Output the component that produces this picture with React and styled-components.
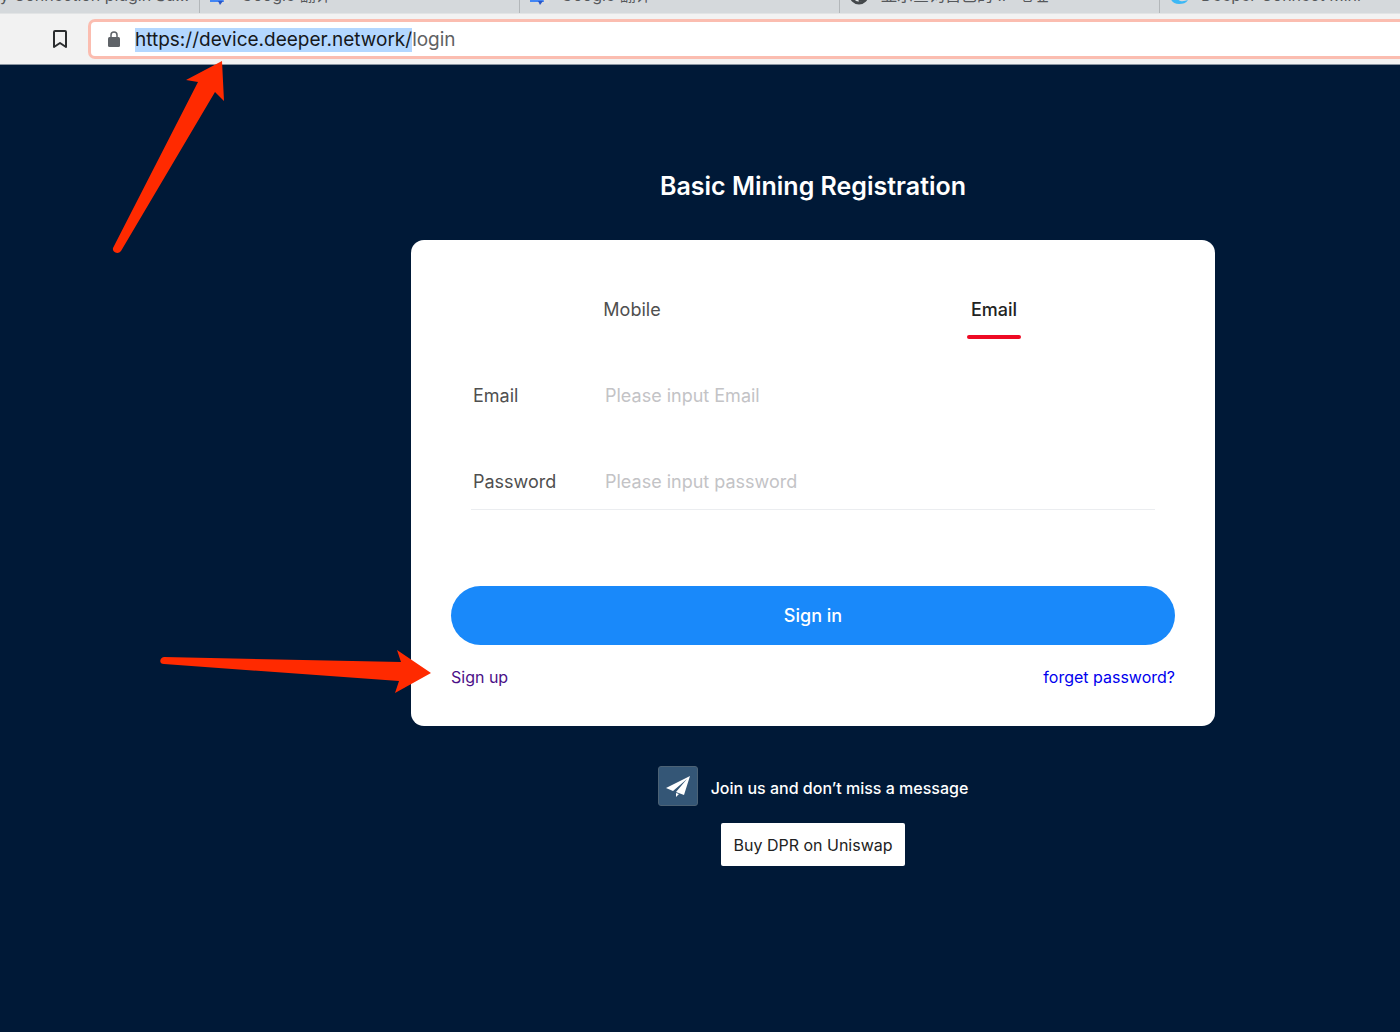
import React, { useState } from 'react';
import styled, { createGlobalStyle } from 'styled-components';

const colors = {
  navy: '#001937',
  white: '#ffffff',
  blue: '#1989fa',
  red: '#ee0a24',
  marker: '#ff2a00',
  text: '#4f4f4f',
  dark: '#222222',
  placeholder: '#c3c3c6',
};

const GlobalStyle = createGlobalStyle`
  * {
    box-sizing: border-box;
  }
  body {
    margin: 0;
    background: ${colors.navy};
    font-family: Inter, 'Noto Sans CJK SC', sans-serif;
  }
  button,
  input {
    font: inherit;
  }
`;

const Window = styled.div`
  position: relative;
  min-height: 100vh;
  overflow: hidden;
`;
const TabStrip = styled.div`
  display: flex;
  height: 14px;
  overflow: hidden;
  background: #d5d9dc;
  border-bottom: 1px solid #e2e4e5;
`;
const BrowserTab = styled.div`
  display: flex;
  flex: 0 0 ${props => (props.$first ? '199px' : '320px')};
  align-items: flex-end;
  height: 14px;
  gap: 12px;
  padding-left: ${props => (props.$first ? '0' : '10px')};
  box-shadow: 1px 0 0 #b3b7ba;
  font-size: 16px;
  line-height: 20px;
  color: #55585b;
  white-space: nowrap;
  svg {
    flex: none;
    margin-bottom: 9px;
  }
  span {
    margin-bottom: 9px;
  }
`;
const Toolbar = styled.div`
  display: flex;
  align-items: center;
  height: 51px;
  padding-left: 50px;
  background: #f2f2f2;
  border-bottom: 1px solid #8a94a0;
`;
const BookmarkButton = styled.button`
  display: flex;
  margin-right: 18px;
  padding: 0;
  border: 0;
  background: transparent;
`;
const AddressBar = styled.div`
  display: flex;
  flex: 1;
  align-items: center;
  height: 40px;
  padding-left: 15px;
  background: ${colors.white};
  border: 3px solid #fbbdb0;
  border-right: 0;
  border-radius: 7px 0 0 7px;
`;
const Url = styled.div`
  margin-left: 13px;
  padding-top: 1px;
  font-size: 19px;
  line-height: 24px;
  color: #5f6163;
  mark {
    display: inline-block;
    background: #b3d7ff;
    color: #16181a;
  }
`;

const Page = styled.main`
  display: flex;
  flex-direction: column;
  align-items: center;
  padding: 105px 0 40px 226px;
`;
const Title = styled.h1`
  margin: 0 0 38px;
  font-size: 25px;
  font-weight: 600;
  line-height: 32px;
  color: ${colors.white};
`;
const Card = styled.form`
  width: 100%;
  max-width: 804px;
  padding: 40px 40px 37px;
  background: ${colors.white};
  border-radius: 13px;
`;
const Tabs = styled.div`
  display: flex;
`;
const Tab = styled.button`
  display: flex;
  flex: 1;
  flex-direction: column;
  align-items: center;
  height: 60px;
  padding: 0;
  border: 0;
  background: transparent;
  font-size: 18px;
  font-weight: ${props => (props.$active ? 500 : 400)};
  line-height: 60px;
  color: ${props => (props.$active ? colors.dark : colors.text)};
  &:after {
    content: '';
    width: 54px;
    height: 4px;
    margin-top: -5px;
    border-radius: 2px;
    background: ${props => (props.$active ? colors.red : 'transparent')};
  }
`;
const Fields = styled.div`
  display: flex;
  flex-direction: column;
  gap: 30px;
  margin: 0 20px;
  padding-top: 27px;
  border-bottom: 1px solid #ebedf0;
`;
const Field = styled.div`
  display: flex;
  align-items: center;
  height: 56px;
  padding-left: 2px;
  font-size: 18px;
  label {
    width: 132px;
    color: ${colors.text};
  }
  input {
    flex: 1;
    min-width: 0;
    padding: 0;
    border: 0;
    outline: none;
    color: ${colors.dark};
  }
  input::placeholder {
    color: ${colors.placeholder};
  }
`;
const SubmitButton = styled.button`
  width: 100%;
  height: 59px;
  margin-top: 76px;
  border: 0;
  border-radius: 30px;
  background: ${colors.blue};
  font-size: 18px;
  font-weight: 500;
  color: ${colors.white};
`;
const CardLinks = styled.div`
  display: flex;
  justify-content: space-between;
  margin-top: 20px;
`;
const CardLink = styled.a`
  font-size: 16px;
  line-height: 24px;
  color: ${props => (props.$visited ? '#4b0f87' : '#0000ee')};
  text-decoration: none;
`;
const JoinLink = styled.a`
  display: flex;
  align-items: center;
  gap: 13px;
  margin-top: 40px;
  font-size: 16px;
  font-weight: 500;
  color: ${colors.white};
  text-decoration: none;
  span {
    padding-top: 4px;
  }
`;
const TelegramBadge = styled.div`
  display: flex;
  align-items: center;
  justify-content: center;
  width: 40px;
  height: 40px;
  border: 1px solid #4c6275;
  border-radius: 3px;
  background: #345676;
`;
const BuyButton = styled.button`
  height: 43px;
  margin-top: 17px;
  padding: 0 12px;
  border: 0;
  border-radius: 2px;
  background: ${colors.white};
  font-size: 16px;
  color: ${colors.dark};
`;
// pointers drawn over the page
const Arrow = styled.svg`
  position: absolute;
  left: ${props => props.$left}px;
  top: ${props => props.$top}px;
  pointer-events: none;
`;

const TranslateIcon = () => (
  <svg width="20" height="20" viewBox="0 0 20 20">
    <rect x="6" y="3" width="14" height="15" rx="1" fill="#dcdcdc" />
    <path d="M1 0h11l3 17H1z" fill="#4285f4" />
    <path d="M9 16h5l-3 4z" fill="#2a56c6" />
  </svg>
);
const GlobeIcon = () => (
  <svg width="20" height="20" viewBox="0 0 20 20">
    <circle cx="10" cy="10" r="8" fill="#e4e7e9" stroke="#44484b" strokeWidth="3" />
    <path d="M10 3c5 2 5 6 1 8s-1 4-1 6c9 0 10-12 0-14z" fill="#44484b" />
  </svg>
);
const SwirlIcon = () => (
  <svg width="20" height="20" viewBox="0 0 20 20">
    <path d="M2 5c-3 8 1 14 8 14 4 0 7-1 9-4-5 2-11 2-11-4z" fill="#3db8f5" />
  </svg>
);

const browserTabs = [
  { title: 'y Connection plugin Su…' },
  { title: 'Google 翻译', icon: TranslateIcon },
  { title: 'Google 翻译', icon: TranslateIcon },
  { title: '显示查询自己的 IP 地址', icon: GlobeIcon },
  { title: 'Deeper Connect Mini', icon: SwirlIcon },
];

const App = () => {
  const [activeTab, setActiveTab] = useState('Email');

  return (
    <Window>
      <GlobalStyle />
      <TabStrip>
        {browserTabs.map(({ title, icon: Icon }, i) => (
          <BrowserTab key={i} $first={i === 0}>
            {Icon && <Icon />}
            <span>{title}</span>
          </BrowserTab>
        ))}
      </TabStrip>
      <Toolbar>
        <BookmarkButton type="button" aria-label="Bookmark">
          <svg width="20" height="22" viewBox="0 0 20 22" fill="none" stroke="#2b2d2f" strokeWidth="2">
            <path d="M4 4q0-1 1-1h10q1 0 1 1v15l-6-4-6 4z" strokeLinejoin="round" />
          </svg>
        </BookmarkButton>
        <AddressBar>
          <svg width="16" height="18" viewBox="0 0 16 18">
            <path d="M5 8V5a3 3 0 0 1 6 0v3" fill="none" stroke="#5f6368" strokeWidth="1.500" />
            <rect x="2" y="7" width="12" height="10" rx="1.500" fill="#5f6368" />
          </svg>
          <Url>
            <mark>https://device.deeper.network/</mark>login
          </Url>
        </AddressBar>
      </Toolbar>
      <Page>
        <Title>Basic Mining Registration</Title>
        <Card onSubmit={e => e.preventDefault()}>
          <Tabs role="tablist">
            {['Mobile', 'Email'].map(name => (
              <Tab
                key={name}
                type="button"
                role="tab"
                aria-selected={activeTab === name}
                $active={activeTab === name}
                onClick={() => setActiveTab(name)}>
                {name}
              </Tab>
            ))}
          </Tabs>
          <Fields>
            <Field>
              <label htmlFor="email">Email</label>
              <input id="email" type="email" placeholder="Please input Email" />
            </Field>
            <Field>
              <label htmlFor="password">Password</label>
              <input id="password" type="password" placeholder="Please input password" />
            </Field>
          </Fields>
          <SubmitButton type="submit">Sign in</SubmitButton>
          <CardLinks>
            <CardLink href="#signup" $visited>
              Sign up
            </CardLink>
            <CardLink href="#forget">forget password?</CardLink>
          </CardLinks>
        </Card>
        <JoinLink href="#telegram">
          <TelegramBadge>
            <svg width="26" height="24" viewBox="0 0 26 24" fill="#ffffff">
              <path d="M25 2 1 14l7 3L22 5 11 18l8 3z" />
              <path d="M11 19v4l3-3z" />
            </svg>
          </TelegramBadge>
          <span>Join us and don’t miss a message</span>
        </JoinLink>
        <BuyButton type="button">Buy DPR on Uniswap</BuyButton>
      </Page>
      <Arrow $left={112} $top={60} width="114" height="196" viewBox="0 0 114 196" fill={colors.marker}>
        <path d="M110 1 74 20l12 2L1 188c-1 4 5 7 8 3L103 32l9 9z" />
      </Arrow>
      <Arrow $left={160} $top={650} width="272" height="44" viewBox="0 0 272 44" fill={colors.marker}>
        <path d="M271 23 237 0l4 12L4 7c-5 1-5 7 0 7l235 17-4 12z" />
      </Arrow>
    </Window>
  );
};

export default App;
